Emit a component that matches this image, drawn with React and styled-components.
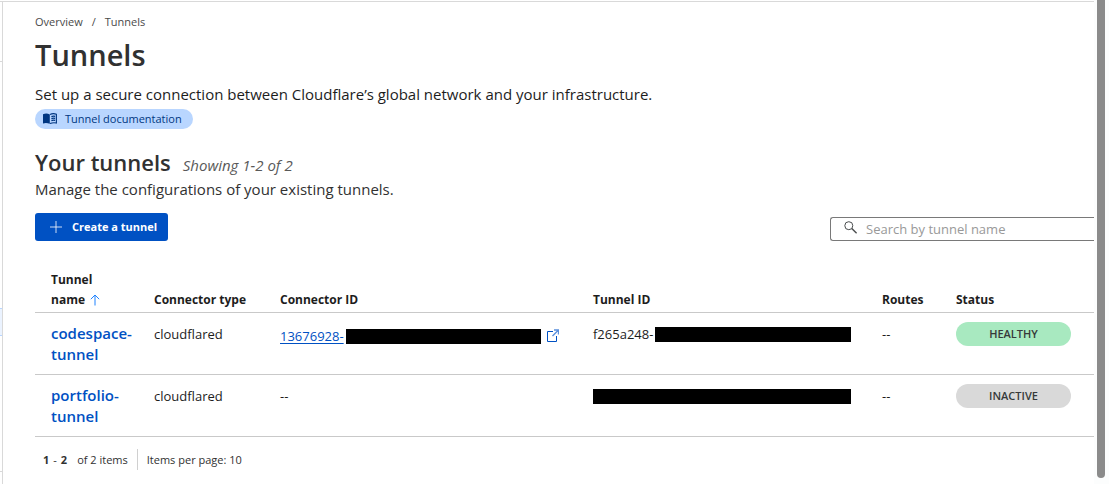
import React from "react";
import styled, { createGlobalStyle } from "styled-components";

const Global = createGlobalStyle`
  *, *::before, *::after { box-sizing: border-box; }
  html, body, #root { height: 100%; }
  body {
    margin: 0;
    background: #fff;
    color: #1d1d1d;
    font: 14px/20px "Open Sans", "Noto Sans", sans-serif;
    overflow: hidden;
  }
  h1, h2, p, ol { margin: 0; padding: 0; }
  button, input { font: inherit; }
`;

const Shell = styled.div`
  display: flex;
  height: 100%;
  padding-top: 1px;
`;
const Rail = styled.div`
  flex: none;
  width: 3px;
  border-top: 1px solid #d9d9d9;
  border-right: 1px solid #d9d9d9;
  display: flex;
  flex-direction: column;
`;
const RailItem = styled.div`
  flex: none;
  height: ${(p) => p.$height}px;
  border-bottom: 1px solid ${(p) => (p.$active ? "#b9d6ff" : "#d9d9d9")};
  background: ${(p) => (p.$active ? "#ebf3ff" : "transparent")};
`;
const RailGap = styled(RailItem)`
  border-bottom-color: #b9d6ff;
`;
const Main = styled.main`
  flex: 1;
  min-width: 0;
  padding: 11px 0 0 32px;
  border-top: 1px solid #d9d9d9;
`;
const ScrollTrack = styled.div`
  flex: none;
  width: 15px;
  padding: 0 4px 6px 3px;
  margin-top: -1px;
  background: #fcfdfd;
`;
const ScrollThumb = styled.div`
  height: 100%;
  background: #8b8b8b;
  border-radius: 0 0 4px 4px;
`;

const Crumbs = styled.ol`
  display: flex;
  gap: 9px;
  list-style: none;
  font-size: 11px;
  line-height: 18px;
  color: #4a4a4a;
`;
const CrumbLink = styled.a`
  color: inherit;
  text-decoration: none;
`;
const Title = styled.h1`
  margin-top: 4px;
  font-size: 29px;
  line-height: 40px;
  font-weight: 600;
  color: #313131;
`;
const Lead = styled.p`
  margin-top: 7px;
  font-size: 15px;
  line-height: 24px;
  color: ${(p) => (p.$soft ? "#313131" : "#1d1d1d")};
`;
const DocLink = styled.a`
  display: flex;
  align-items: center;
  gap: 8px;
  width: fit-content;
  height: 20px;
  margin-top: 3px;
  padding: 0 11px 0 8px;
  border-radius: 10px;
  background: #b9d6ff;
  color: #003681;
  font-size: 11px;
  text-decoration: none;
`;
const SectionHead = styled.div`
  display: flex;
  align-items: baseline;
  gap: 12px;
  margin-top: 18px;
`;
const SectionTitle = styled.h2`
  font-size: 22px;
  line-height: 30px;
  font-weight: 600;
  color: #313131;
`;
const Count = styled.em`
  font-size: 15px;
  color: #595959;
`;
const SectionText = styled(Lead)`
  margin-top: 0;
`;
const Toolbar = styled.div`
  display: flex;
  justify-content: space-between;
  align-items: flex-end;
  margin-top: 12px;
`;
const CreateButton = styled.button`
  display: flex;
  align-items: center;
  gap: 10px;
  height: 28px;
  padding: 0 11px 0 15px;
  border: 0;
  border-radius: 3px;
  background: #0051c3;
  color: #fff;
  font-size: 11px;
  font-weight: 700;
`;
const SearchBox = styled.label`
  display: flex;
  align-items: center;
  gap: 8px;
  width: 264px;
  height: 24px;
  padding-left: 13px;
  border: 1px solid #797979;
  border-right: 0;
  border-radius: 3px 0 0 3px;
`;
const SearchInput = styled.input`
  flex: 1;
  min-width: 0;
  height: 20px;
  padding: 0;
  border: 0;
  outline: 0;
  background: transparent;
  font-size: 13px;
  color: #1d1d1d;
  &::placeholder { color: #999; opacity: 1; }
`;

const Table = styled.table`
  width: 100%;
  margin-top: 24px;
  border-collapse: separate;
  border-spacing: 0;
  table-layout: fixed;
`;
const Col = styled.col`
  width: ${(p) => p.$width};
`;
const Th = styled.th`
  padding: 5px 0 2px;
  text-align: left;
  vertical-align: bottom;
  font-size: 12px;
  font-weight: 700;
  border-bottom: 1px solid #c9c9c9;
  &:first-child { padding-left: 16px; padding-right: 40px; }
`;
const Td = styled.td`
  height: 62px;
  padding: 11px 0 8px;
  vertical-align: top;
  font-size: 13px;
  border-bottom: 1px solid #c9c9c9;
`;
const NameCell = styled(Td)`
  padding-top: 10px;
  padding-left: 16px;
`;
const NameLink = styled.a`
  display: block;
  width: 90px;
  color: #0051c3;
  font-size: 15px;
  line-height: 21px;
  font-weight: 600;
  text-decoration: none;
`;
const IdRow = styled.div`
  display: flex;
  align-items: center;
  padding-top: ${(p) => (p.$linked ? "2px" : "0")};
`;
const IdLink = styled.a`
  display: flex;
  align-items: center;
  gap: 6px;
  color: #0051c3;
  text-underline-offset: 2px;
`;
const IdText = styled.span`
  display: flex;
  align-items: center;
  gap: 2px;
  min-height: 20px;
  width: ${(p) => p.$width}px;
`;
const Redacted = styled.span`
  flex: 1;
  height: 15px;
  background: #000;
`;
const Status = styled.span`
  display: block;
  width: 115px;
  border-radius: 12px;
  background: ${(p) => (p.$healthy ? "#a8e9c0" : "#d9d9d9")};
  color: #36393a;
  font-size: 11px;
  line-height: 24px;
  font-weight: 600;
  text-align: center;
`;
const StatusCell = styled(Td)`
  padding-top: 9px;
`;
const Footer = styled.footer`
  display: flex;
  align-items: center;
  margin-top: 12px;
  padding-left: 8px;
  font-size: 11px;
  line-height: 21px;
  color: #313131;
`;
const Range = styled.span`
  display: flex;
  gap: 4px;
  margin-right: 10px;
`;
const PerPage = styled.span`
  margin-left: 9px;
  padding-left: 9px;
  border-left: 1px solid #d0d0d0;
`;

const BookIcon = () => (
  <svg width="14" height="12" viewBox="0 0 14 12" aria-hidden="true">
    <path d="M0 1.2Q3.5-.2 6.8 1.4V10.8Q3.5 9.4 0 10.4Z" fill="#003681" />
    <path d="M7 1.5Q10-.1 13.4 1.2V10Q10 9.2 7 10.6" fill="none" stroke="#003681" strokeWidth="1.1" />
    <path d="M8.4 3.6Q10.4 2.7 12.2 3.4M8.4 5.6Q10.4 4.7 12.2 5.4M8.4 7.6Q10.4 6.7 12.2 7.4" fill="none" stroke="#003681" strokeWidth="1.2" />
  </svg>
);
const PlusIcon = () => (
  <svg width="12" height="12" viewBox="0 0 12 12" aria-hidden="true">
    <path d="M6 0V12M0 6H12" stroke="#fff" strokeOpacity=".8" />
  </svg>
);
const SearchIcon = () => (
  <svg width="14" height="16" viewBox="0 0 14 16" fill="none" stroke="#4a4d4e" aria-hidden="true">
    <circle cx="4.8" cy="4.7" r="4" />
    <path d="M7.8 7.6L12.6 12.2" strokeWidth="1.4" />
  </svg>
);
const SortIcon = () => (
  <svg width="10" height="12" viewBox="0 0 10 12" fill="none" stroke="#1f82ff" aria-hidden="true">
    <path d="M5 11.5V1M.8 5.2L5 1L9.2 5.2" />
  </svg>
);
const ExternalIcon = () => (
  <svg width="12" height="14" viewBox="0 0 12 14" fill="none" stroke="#0051c3" aria-hidden="true">
    <path d="M6 2.5H.5V12.5H9.5V7" />
    <path d="M5.5 7L11 1.5M7 1H11.5V5.5" stroke="#5a8fdc" strokeWidth="1.4" />
  </svg>
);

const SortLabel = styled.span`
  display: flex;
  align-items: center;
  gap: 5px;
  white-space: nowrap;
`;

const columns = ["119px", "126px", "313px", "289px", "74px", "auto"];
const tunnels = [
  { name: "codespace-tunnel", type: "cloudflared", connector: "13676928-", id: "f265a248-", routes: "--", status: "HEALTHY" },
  { name: "portfolio-tunnel", type: "cloudflared", connector: null, id: null, routes: "--", status: "INACTIVE" },
];

export default function App() {
  return (
    <>
      <Global />
      <Shell>
        <Rail>
          <RailItem $height={60} />
          <RailGap $height={247} />
          <RailItem $active $height={27} />
          <RailItem $height={136} />
        </Rail>
        <Main>
          <nav aria-label="Breadcrumb">
            <Crumbs>
              <li><CrumbLink href="#overview">Overview</CrumbLink></li>
              <li aria-hidden="true">/</li>
              <li>Tunnels</li>
            </Crumbs>
          </nav>
          <Title>Tunnels</Title>
          <Lead>Set up a secure connection between Cloudflare’s global network and your infrastructure.</Lead>
          <DocLink href="#docs"><BookIcon />Tunnel documentation</DocLink>
          <SectionHead>
            <SectionTitle>Your tunnels</SectionTitle>
            <Count>Showing 1-2 of 2</Count>
          </SectionHead>
          <SectionText $soft>Manage the configurations of your existing tunnels.</SectionText>
          <Toolbar>
            <CreateButton type="button"><PlusIcon />Create a tunnel</CreateButton>
            <SearchBox>
              <SearchIcon />
              <SearchInput type="search" aria-label="Search by tunnel name" placeholder="Search by tunnel name" />
            </SearchBox>
          </Toolbar>
          <Table>
            <colgroup>{columns.map((w, i) => <Col key={i} $width={w} />)}</colgroup>
            <thead>
              <tr>
                <Th scope="col" aria-sort="ascending">Tunnel <SortLabel>name <SortIcon /></SortLabel></Th>
                <Th scope="col">Connector type</Th>
                <Th scope="col">Connector ID</Th>
                <Th scope="col">Tunnel ID</Th>
                <Th scope="col">Routes</Th>
                <Th scope="col">Status</Th>
              </tr>
            </thead>
            <tbody>
              {tunnels.map((t) => (
                <tr key={t.name}>
                  <NameCell><NameLink href={"#" + t.name}>{t.name}</NameLink></NameCell>
                  <Td>{t.type}</Td>
                  <Td>
                    {t.connector ? (
                      <IdRow $linked>
                        <IdLink href="#connector">
                          <IdText $width={261}>{t.connector}<Redacted /></IdText>
                          <ExternalIcon />
                        </IdLink>
                      </IdRow>
                    ) : "--"}
                  </Td>
                  <Td><IdRow><IdText $width={258}>{t.id}<Redacted /></IdText></IdRow></Td>
                  <Td>{t.routes}</Td>
                  <StatusCell><Status $healthy={t.status === "HEALTHY"}>{t.status}</Status></StatusCell>
                </tr>
              ))}
            </tbody>
          </Table>
          <Footer>
            <Range><b>1</b><span>-</span><b>2</b></Range>
            <span>of 2 items</span>
            <PerPage>Items per page: 10</PerPage>
          </Footer>
        </Main>
        <ScrollTrack><ScrollThumb /></ScrollTrack>
      </Shell>
    </>
  );
}
